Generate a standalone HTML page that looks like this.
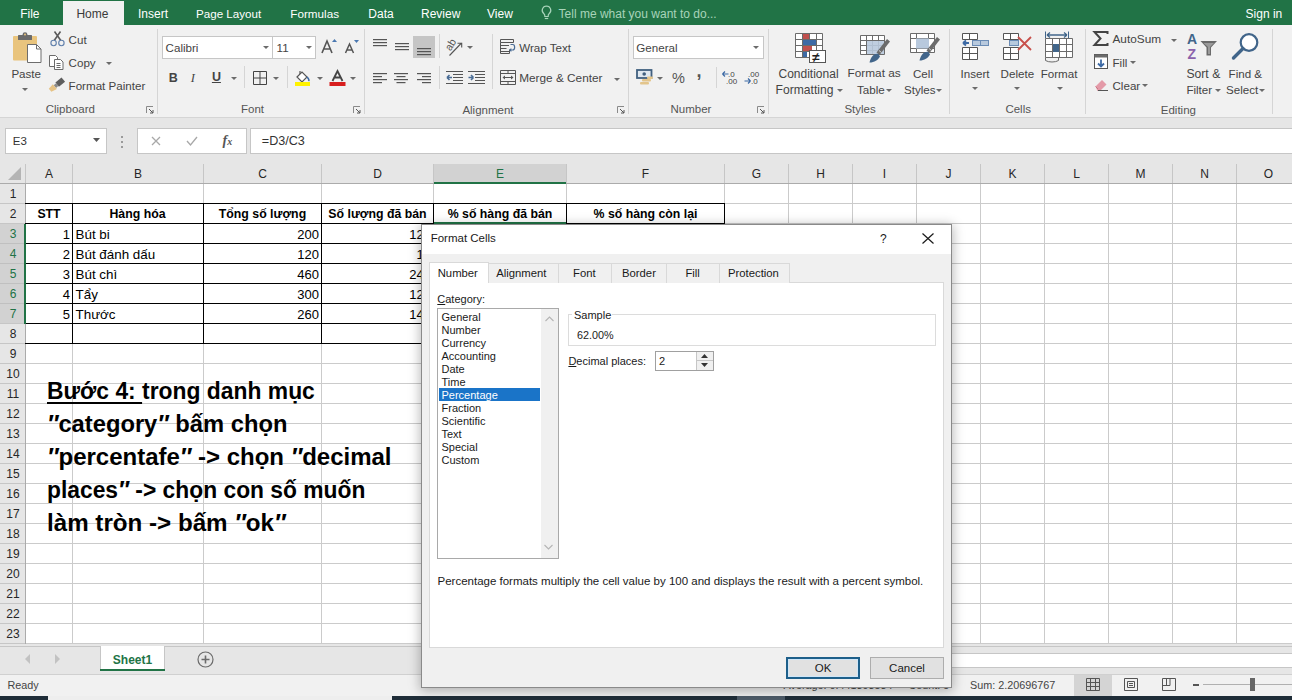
<!DOCTYPE html>
<html><head><meta charset="utf-8"><title>Excel</title><style>
*{margin:0;padding:0;box-sizing:border-box}
html,body{width:1292px;height:700px;overflow:hidden}
body{position:relative;background:#fff;font-family:"Liberation Sans",sans-serif;color:#262626}
.a{position:absolute;white-space:nowrap}
svg.a{overflow:visible}
</style></head><body>
<div class="a" style="left:0px;top:0px;width:1292px;height:25px;background:#217346"></div>
<div class="a" style="left:63px;top:1px;width:61px;height:24px;background:#f1f1f1"></div>
<div class="a" style="left:20.2px;top:7.8px;font-size:12px;line-height:12px;color:#ffffff;font-weight:400;">File</div>
<div class="a" style="left:76.4px;top:7.8px;font-size:12px;line-height:12px;color:#3a3a3a;font-weight:400;">Home</div>
<div class="a" style="left:138px;top:7.8px;font-size:12px;line-height:12px;color:#ffffff;font-weight:400;">Insert</div>
<div class="a" style="left:196px;top:8.0px;font-size:11.6px;line-height:11.6px;color:#ffffff;font-weight:400;">Page Layout</div>
<div class="a" style="left:290.3px;top:8.0px;font-size:11.7px;line-height:11.7px;color:#ffffff;font-weight:400;">Formulas</div>
<div class="a" style="left:368.3px;top:7.8px;font-size:12px;line-height:12px;color:#ffffff;font-weight:400;">Data</div>
<div class="a" style="left:421px;top:7.8px;font-size:12px;line-height:12px;color:#ffffff;font-weight:400;">Review</div>
<div class="a" style="left:487px;top:7.8px;font-size:12px;line-height:12px;color:#ffffff;font-weight:400;">View</div>
<div class="a" style="left:558.6px;top:7.6px;font-size:12px;line-height:12px;color:#a8d4ba;font-weight:400;">Tell me what you want to do...</div>
<svg class="a" style="left:541px;top:5px" width="11" height="15" viewBox="0 0 11 15"><path d="M5.5 1a4.3 4.3 0 0 0-2.6 7.7c.6.5.9 1.2.9 2v.8h3.4v-.8c0-.8.3-1.5.9-2A4.3 4.3 0 0 0 5.5 1z" fill="none" stroke="#a8d4ba" stroke-width="1.2"/><path d="M3.8 13.5h3.4" stroke="#a8d4ba" stroke-width="1.2"/></svg>
<div class="a" style="left:1245.6px;top:7.8px;font-size:12px;line-height:12px;color:#ffffff;font-weight:400;">Sign in</div>
<div class="a" style="left:0px;top:25px;width:1292px;height:92px;background:#f1f1f1"></div>
<div class="a" style="left:0px;top:117px;width:1292px;height:1px;background:#d5d5d5"></div>
<div class="a" style="left:157px;top:29px;width:1px;height:85px;background:#d5d5d5"></div>
<div class="a" style="left:364px;top:29px;width:1px;height:85px;background:#d5d5d5"></div>
<div class="a" style="left:628px;top:29px;width:1px;height:85px;background:#d5d5d5"></div>
<div class="a" style="left:768px;top:29px;width:1px;height:85px;background:#d5d5d5"></div>
<div class="a" style="left:949px;top:29px;width:1px;height:85px;background:#d5d5d5"></div>
<div class="a" style="left:1085px;top:29px;width:1px;height:85px;background:#d5d5d5"></div>
<div class="a" style="left:1272px;top:29px;width:1px;height:85px;background:#d5d5d5"></div>
<div class="a" style="left:45.7px;top:104.2px;font-size:11.5px;line-height:11.5px;color:#555;font-weight:400;">Clipboard</div>
<svg class="a" style="left:146px;top:106px" width="8" height="8" viewBox="0 0 8 8"><path d="M0.5 0.5h6.5M0.5 0.5v6.5" stroke="#8a8a8a" stroke-width="1" fill="none"/><path d="M3 3l4 4M4 7h3V4" stroke="#555" stroke-width="1" fill="none"/></svg>
<div class="a" style="left:241px;top:104.0px;font-size:11.5px;line-height:11.5px;color:#555;font-weight:400;">Font</div>
<svg class="a" style="left:353px;top:106px" width="8" height="8" viewBox="0 0 8 8"><path d="M0.5 0.5h6.5M0.5 0.5v6.5" stroke="#8a8a8a" stroke-width="1" fill="none"/><path d="M3 3l4 4M4 7h3V4" stroke="#555" stroke-width="1" fill="none"/></svg>
<div class="a" style="left:462.4px;top:104.5px;font-size:11.5px;line-height:11.5px;color:#555;font-weight:400;">Alignment</div>
<svg class="a" style="left:617px;top:106px" width="8" height="8" viewBox="0 0 8 8"><path d="M0.5 0.5h6.5M0.5 0.5v6.5" stroke="#8a8a8a" stroke-width="1" fill="none"/><path d="M3 3l4 4M4 7h3V4" stroke="#555" stroke-width="1" fill="none"/></svg>
<div class="a" style="left:670.5px;top:104.2px;font-size:11.5px;line-height:11.5px;color:#555;font-weight:400;">Number</div>
<svg class="a" style="left:757px;top:106px" width="8" height="8" viewBox="0 0 8 8"><path d="M0.5 0.5h6.5M0.5 0.5v6.5" stroke="#8a8a8a" stroke-width="1" fill="none"/><path d="M3 3l4 4M4 7h3V4" stroke="#555" stroke-width="1" fill="none"/></svg>
<div class="a" style="left:844.4px;top:104.2px;font-size:11.5px;line-height:11.5px;color:#555;font-weight:400;">Styles</div>
<div class="a" style="left:1005.4px;top:104.2px;font-size:11.5px;line-height:11.5px;color:#555;font-weight:400;">Cells</div>
<div class="a" style="left:1160.8px;top:104.5px;font-size:11.5px;line-height:11.5px;color:#555;font-weight:400;">Editing</div>
<svg class="a" style="left:12px;top:32px" width="30" height="32" viewBox="0 0 30 32"><rect x="1" y="4" width="24" height="24.5" rx="1" fill="#e9c47d"/><rect x="6" y="3" width="14" height="5" rx="0.5" fill="#6a6a6a"/><circle cx="13" cy="2.6" r="2.4" fill="#6a6a6a"/><circle cx="13" cy="2.6" r="1" fill="#e9c47d"/><path d="M15.5 12.5h9l4.5 4.5v13.5h-13.5z" fill="#fff" stroke="#6d6d6d"/><path d="M24.5 12.5v4.5h4.5" fill="none" stroke="#6d6d6d"/></svg>
<div class="a" style="left:11.4px;top:68.2px;font-size:11.6px;line-height:11.6px;color:#444;font-weight:400;">Paste</div>
<svg class="a" style="left:21.6px;top:88.1px" width="6" height="3" viewBox="0 0 6 3"><path d="M0 0h6L3 3z" fill="#6b6b6b"/></svg>
<svg class="a" style="left:50px;top:31px" width="15" height="16" viewBox="0 0 15 16"><path d="M4.2 9.5L10.5 0.5M10.8 9.5L4.5 0.5" stroke="#5a5a5a" stroke-width="1.6"/><circle cx="3.6" cy="12" r="2.7" fill="none" stroke="#5f7fab" stroke-width="1.1"/><circle cx="11.4" cy="12" r="2.7" fill="none" stroke="#5f7fab" stroke-width="1.1"/></svg>
<div class="a" style="left:68.6px;top:34.2px;font-size:11.6px;line-height:11.6px;color:#444;font-weight:400;">Cut</div>
<svg class="a" style="left:49px;top:55px" width="15" height="15" viewBox="0 0 15 15"><path d="M0.5 0.5h6l2 2v9h-8z" fill="#fff" stroke="#6b6b6b"/><path d="M5.5 4.5h6l2.5 2.5v7.5h-8.5z" fill="#fff" stroke="#6b6b6b"/><path d="M7.5 8.5h4M7.5 10.5h4M7.5 12.5h4" stroke="#6b6b6b"/></svg>
<div class="a" style="left:68.6px;top:57.2px;font-size:11.6px;line-height:11.6px;color:#444;font-weight:400;">Copy</div>
<svg class="a" style="left:105.6px;top:61.5px" width="6" height="3" viewBox="0 0 6 3"><path d="M0 0h6L3 3z" fill="#6b6b6b"/></svg>
<svg class="a" style="left:48px;top:77px" width="18" height="15" viewBox="0 0 18 15"><g transform="rotate(-40 9 7.5)"><rect x="9" y="5" width="8" height="5.5" fill="#5e5e5e"/><rect x="6" y="6" width="3" height="3.5" fill="#8a8a8a"/><path d="M6 4.5L0 5.5v4L6 11z" fill="#e6c386"/></g></svg>
<div class="a" style="left:68.6px;top:79.9px;font-size:11.6px;line-height:11.6px;color:#444;font-weight:400;">Format Painter</div>
<div class="a" style="left:162px;top:36px;width:111px;height:23px;background:#fff;border:1px solid #c6c6c6"></div>
<div class="a" style="left:272px;top:36px;width:44px;height:23px;background:#fff;border:1px solid #c6c6c6"></div>
<div class="a" style="left:165.6px;top:42.0px;font-size:11.6px;line-height:11.6px;color:#444;font-weight:400;">Calibri</div>
<svg class="a" style="left:262.5px;top:46.0px" width="6" height="3" viewBox="0 0 6 3"><path d="M0 0h6L3 3z" fill="#6b6b6b"/></svg>
<div class="a" style="left:276.6px;top:42.0px;font-size:11.6px;line-height:11.6px;color:#444;font-weight:400;">11</div>
<svg class="a" style="left:305.6px;top:46.0px" width="6" height="3" viewBox="0 0 6 3"><path d="M0 0h6L3 3z" fill="#6b6b6b"/></svg>
<svg class="a" style="left:321px;top:38px" width="16" height="16" viewBox="0 0 16 16"><path d="M1 15L6 3l5 12M3 11h6" fill="none" stroke="#555" stroke-width="1.6"/><path d="M11 4l2.5-3 2.5 3z" fill="#4a78b0"/></svg>
<svg class="a" style="left:344px;top:39px" width="15" height="15" viewBox="0 0 15 15"><path d="M1.5 14L5.5 5l4 9M3 11h5" fill="none" stroke="#555" stroke-width="1.5"/><path d="M10 1h5l-2.5 3z" fill="#4a78b0"/></svg>
<div class="a" style="left:168.8px;top:71.5px;font-size:12.5px;line-height:12.5px;color:#444;font-weight:700;">B</div>
<div class="a" style="left:190.8px;top:71.5px;font-size:12.5px;line-height:12.5px;color:#444;font-weight:400;font-style:italic;font-family:'Liberation Serif',serif">I</div>
<div class="a" style="left:211.9px;top:71.0px;font-size:12.5px;line-height:12.5px;color:#444;font-weight:700;"><u>U</u></div>
<svg class="a" style="left:230.5px;top:76.5px" width="6" height="3" viewBox="0 0 6 3"><path d="M0 0h6L3 3z" fill="#6b6b6b"/></svg>
<div class="a" style="left:244px;top:66px;width:1px;height:22px;background:#d5d5d5"></div>
<svg class="a" style="left:253px;top:71px" width="14" height="14" viewBox="0 0 14 14"><path d="M0.5 0.5h13v13h-13zM7 0.5v13M0.5 7h13" fill="none" stroke="#444" stroke-width="1"/></svg>
<svg class="a" style="left:273px;top:76.5px" width="6" height="3" viewBox="0 0 6 3"><path d="M0 0h6L3 3z" fill="#6b6b6b"/></svg>
<div class="a" style="left:287px;top:66px;width:1px;height:22px;background:#d5d5d5"></div>
<svg class="a" style="left:294px;top:70px" width="18" height="17" viewBox="0 0 18 17"><path d="M3 7l5-5 5 5-5 5z" fill="#fff" stroke="#555" stroke-width="1.2"/><path d="M6 4V1" stroke="#555" stroke-width="1.2"/><path d="M13 7c1.5 1.5 2.5 3 1.5 4" stroke="#3d6aa5" stroke-width="1.6" fill="none"/><rect x="1" y="12" width="15" height="4" fill="#fff200"/></svg>
<svg class="a" style="left:316.5px;top:76.5px" width="6" height="3" viewBox="0 0 6 3"><path d="M0 0h6L3 3z" fill="#6b6b6b"/></svg>
<svg class="a" style="left:329px;top:70px" width="17" height="17" viewBox="0 0 17 17"><path d="M3.5 11L8.5 1l5 10M5.5 7.5h6" fill="none" stroke="#444" stroke-width="1.8"/><rect x="0.5" y="12" width="16" height="4" fill="#d81e1e"/></svg>
<svg class="a" style="left:350.4px;top:76.5px" width="6" height="3" viewBox="0 0 6 3"><path d="M0 0h6L3 3z" fill="#6b6b6b"/></svg>
<svg class="a" style="left:373px;top:39px" width="14" height="9" viewBox="0 0 14 9"><rect x="0" y="0" width="14" height="1.2" fill="#555"/><rect x="0" y="3" width="14" height="1.2" fill="#555"/><rect x="0" y="6" width="14" height="1.2" fill="#555"/></svg>
<svg class="a" style="left:394.5px;top:43px" width="14" height="9" viewBox="0 0 14 9"><rect x="0" y="0" width="14" height="1.2" fill="#555"/><rect x="0" y="3" width="14" height="1.2" fill="#555"/><rect x="0" y="6" width="14" height="1.2" fill="#555"/></svg>
<div class="a" style="left:413px;top:36px;width:22px;height:22px;background:#c5c5c5"></div>
<svg class="a" style="left:417px;top:48px" width="14" height="9" viewBox="0 0 14 9"><rect x="0" y="0" width="14" height="1.2" fill="#555"/><rect x="0" y="3" width="14" height="1.2" fill="#555"/><rect x="0" y="6" width="14" height="1.2" fill="#555"/></svg>
<div class="a" style="left:439px;top:34px;width:1px;height:24px;background:#d5d5d5"></div>
<div class="a" style="left:439px;top:66px;width:1px;height:23px;background:#d5d5d5"></div>
<svg class="a" style="left:446px;top:38px" width="18" height="18" viewBox="0 0 18 18"><text x="0" y="0" font-size="10.5" font-family="Liberation Sans" fill="#555" transform="translate(4.5 13.5) rotate(-58)">ab</text><path d="M3.5 17.5L15.5 5M11.5 5.2h4.2v4.2" stroke="#555" stroke-width="1.1" fill="none"/></svg>
<svg class="a" style="left:466.7px;top:45.5px" width="6" height="3" viewBox="0 0 6 3"><path d="M0 0h6L3 3z" fill="#6b6b6b"/></svg>
<div class="a" style="left:491.7px;top:34px;width:1px;height:55px;background:#d5d5d5"></div>
<svg class="a" style="left:500px;top:39px" width="17" height="15" viewBox="0 0 17 15"><path d="M0.5 0.5h13v3h-13zM0.5 3.5v11h9M0.5 6.5h8.5M0.5 9.5h6M0.5 12.5h8.5M9.5 14.5v-4" fill="none" stroke="#555" stroke-width="1"/><path d="M10.5 5.5h2.2c2.6 0 2.6 5.5 0 5.5H10" fill="none" stroke="#4a6d96" stroke-width="1.2"/><path d="M9 11l2.3-2v4z" fill="#4a6d96"/></svg>
<div class="a" style="left:519.2px;top:42.2px;font-size:11.6px;line-height:11.6px;color:#444;font-weight:400;">Wrap Text</div>
<svg class="a" style="left:373px;top:73px" width="14" height="12" viewBox="0 0 14 12"><rect x="0" y="0" width="14" height="1.2" fill="#555"/><rect x="0" y="3" width="9" height="1.2" fill="#555"/><rect x="0" y="6" width="14" height="1.2" fill="#555"/><rect x="0" y="9" width="9" height="1.2" fill="#555"/></svg>
<svg class="a" style="left:394px;top:73px" width="14" height="12" viewBox="0 0 14 12"><rect x="0.0" y="0" width="14" height="1.2" fill="#555"/><rect x="2.5" y="3" width="9" height="1.2" fill="#555"/><rect x="0.0" y="6" width="14" height="1.2" fill="#555"/><rect x="2.5" y="9" width="9" height="1.2" fill="#555"/></svg>
<svg class="a" style="left:417px;top:73px" width="14" height="12" viewBox="0 0 14 12"><rect x="0" y="0" width="14" height="1.2" fill="#555"/><rect x="5" y="3" width="9" height="1.2" fill="#555"/><rect x="0" y="6" width="14" height="1.2" fill="#555"/><rect x="5" y="9" width="9" height="1.2" fill="#555"/></svg>
<svg class="a" style="left:446px;top:70px" width="17" height="15" viewBox="0 0 17 15"><path d="M0 1.5h17M7 4.5h10M7 7.5h10M7 10.5h10M0 13.5h17" stroke="#555" stroke-width="1.1"/><path d="M1 7.5h5M1 7.5l2.5-2.5M1 7.5l2.5 2.5" stroke="#4a6d96" stroke-width="1.6" fill="none"/></svg>
<svg class="a" style="left:468px;top:70px" width="17" height="15" viewBox="0 0 17 15"><path d="M0 1.5h17M7 4.5h10M7 7.5h10M7 10.5h10M0 13.5h17" stroke="#555" stroke-width="1.1"/><path d="M0.5 7.5h5M5.5 7.5L3 5M5.5 7.5L3 10" stroke="#4a6d96" stroke-width="1.6" fill="none"/></svg>
<svg class="a" style="left:500px;top:70px" width="16" height="15" viewBox="0 0 16 15"><path d="M0.5 0.5h15v14h-15zM0.5 3.5h15M0.5 11.5h15M8 0.5v3M8 11.5v3" fill="none" stroke="#555" stroke-width="1"/><path d="M3 7.5h10" stroke="#555" stroke-width="1"/><path d="M2.5 7.5l2.5-2v4zM13.5 7.5l-2.5-2v4z" fill="#555"/></svg>
<div class="a" style="left:519.2px;top:73.1px;font-size:11.8px;line-height:11.8px;color:#444;font-weight:400;">Merge &amp; Center</div>
<svg class="a" style="left:613.6px;top:77.5px" width="6" height="3" viewBox="0 0 6 3"><path d="M0 0h6L3 3z" fill="#6b6b6b"/></svg>
<div class="a" style="left:633px;top:36px;width:131px;height:23px;background:#fff;border:1px solid #c6c6c6"></div>
<div class="a" style="left:636.3px;top:41.6px;font-size:11.6px;line-height:11.6px;color:#444;font-weight:400;">General</div>
<svg class="a" style="left:753.4px;top:46.0px" width="6" height="3" viewBox="0 0 6 3"><path d="M0 0h6L3 3z" fill="#6b6b6b"/></svg>
<svg class="a" style="left:636px;top:69px" width="18" height="18" viewBox="0 0 18 18"><rect x="1" y="1" width="14.5" height="8" fill="#dfe8f0" stroke="#41607f" stroke-width="1.8"/><circle cx="8.2" cy="5" r="1.8" fill="#41607f"/><rect x="6" y="10" width="9" height="2.4" rx="1" fill="#e3c58c"/><rect x="4" y="13" width="9" height="2.4" rx="1" fill="#e3c58c"/><rect x="11" y="7.5" width="6" height="2.4" rx="1" fill="#e3c58c"/></svg>
<svg class="a" style="left:657.4px;top:76.5px" width="6" height="3" viewBox="0 0 6 3"><path d="M0 0h6L3 3z" fill="#6b6b6b"/></svg>
<div class="a" style="left:672px;top:71.0px;font-size:14.5px;line-height:14.5px;color:#555;font-weight:400;">%</div>
<div class="a" style="left:696.5px;top:61.5px;font-size:18px;line-height:18px;color:#555;font-weight:700;">,</div>
<div class="a" style="left:715.7px;top:67px;width:1px;height:21px;background:#d5d5d5"></div>
<svg class="a" style="left:722px;top:70px" width="17" height="15" viewBox="0 0 17 15"><text x="6" y="7" font-size="8" font-family="Liberation Sans" fill="#444">.0</text><text x="4" y="14" font-size="8" font-family="Liberation Sans" fill="#444">.00</text><path d="M0.5 4h6M0.5 4l2.5-2.5M0.5 4l2.5 2.5" stroke="#3d6aa5" stroke-width="1.2" fill="none"/></svg>
<svg class="a" style="left:744px;top:70px" width="17" height="15" viewBox="0 0 17 15"><text x="4" y="7" font-size="8" font-family="Liberation Sans" fill="#444">.00</text><text x="7" y="14" font-size="8" font-family="Liberation Sans" fill="#444">.0</text><path d="M0.5 11h6M6.5 11l-2.5-2.5M6.5 11l-2.5 2.5" stroke="#3d6aa5" stroke-width="1.2" fill="none"/></svg>
<svg class="a" style="left:795px;top:33px" width="31" height="30" viewBox="0 0 31 30"><path d="M0.5 0.5h27v24h-27zM0.5 6.5h27M0.5 12.5h27M0.5 18.5h27M7.5 0.5v24M14.5 0.5v24M21.5 0.5v24" fill="#fff" stroke="#6b6b6b" stroke-width="1"/><rect x="8" y="1" width="6" height="5" fill="#c0504d"/><rect x="8" y="7" width="13" height="5" fill="#3d6aa5"/><rect x="8" y="13" width="9" height="5" fill="#c0504d"/><rect x="8" y="19" width="4" height="5" fill="#3d6aa5"/><rect x="14.5" y="17.5" width="16" height="12" fill="#fff" stroke="#555"/><text x="17.2" y="28.5" font-size="13.5" font-weight="700" font-family="Liberation Sans" fill="#222">≠</text></svg>
<div class="a" style="left:778.5px;top:68.0px;font-size:12px;line-height:12px;color:#444;font-weight:400;">Conditional</div>
<div class="a" style="left:775.6px;top:83.7px;font-size:12.1px;line-height:12.1px;color:#444;font-weight:400;">Formatting</div>
<svg class="a" style="left:836.7px;top:88.5px" width="6" height="3" viewBox="0 0 6 3"><path d="M0 0h6L3 3z" fill="#6b6b6b"/></svg>
<svg class="a" style="left:860px;top:35px" width="30" height="28" viewBox="0 0 30 28"><path d="M0.5 0.5h24v19h-24zM0.5 5.5h24M0.5 10.5h24M0.5 15.5h24M6.5 0.5v19M12.5 0.5v19M18.5 0.5v19" fill="#fff" stroke="#6b6b6b" stroke-width="1"/><rect x="7" y="6" width="17" height="13" fill="#b8c9dd" opacity="0.9"/><path d="M16.5 17.5L27 4l3 2.5-10.5 13.5z" fill="#6b6b6b"/><path d="M19 15.5l2.5 2" stroke="#cfcfcf" stroke-width="1"/><path d="M9.5 27.5c1.5-6 5-9.5 9-8.5l1.5 2.5c-2 3.5-5.5 6-10.5 6z" fill="#41658a"/></svg>
<div class="a" style="left:847.6px;top:68.1px;font-size:11.8px;line-height:11.8px;color:#444;font-weight:400;">Format as</div>
<div class="a" style="left:857px;top:83.9px;font-size:11.6px;line-height:11.6px;color:#444;font-weight:400;">Table</div>
<svg class="a" style="left:885.5px;top:88.5px" width="6" height="3" viewBox="0 0 6 3"><path d="M0 0h6L3 3z" fill="#6b6b6b"/></svg>
<svg class="a" style="left:910px;top:33px" width="30" height="29" viewBox="0 0 30 29"><path d="M0.5 0.5h24v19h-24zM0.5 5.5h24M0.5 15.5h24M6.5 0.5v19M18.5 0.5v19" fill="#fff" stroke="#6b6b6b" stroke-width="1"/><rect x="6" y="5.5" width="13" height="10" fill="#b8c9dd"/><path d="M16.5 17.5L27 4l3 2.5-10.5 13.5z" fill="#6b6b6b"/><path d="M19 15.5l2.5 2" stroke="#cfcfcf" stroke-width="1"/><path d="M9.5 27.5c1.5-6 5-9.5 9-8.5l1.5 2.5c-2 3.5-5.5 6-10.5 6z" fill="#41658a"/></svg>
<div class="a" style="left:913px;top:68.2px;font-size:11.6px;line-height:11.6px;color:#444;font-weight:400;">Cell</div>
<div class="a" style="left:904px;top:83.9px;font-size:11.6px;line-height:11.6px;color:#444;font-weight:400;">Styles</div>
<svg class="a" style="left:936px;top:88.5px" width="6" height="3" viewBox="0 0 6 3"><path d="M0 0h6L3 3z" fill="#6b6b6b"/></svg>
<svg class="a" style="left:962px;top:33px" width="27" height="27" viewBox="0 0 27 27"><path d="M0.5 0.5h15v6h-15zM7.5 0.5v6M0.5 14.5h15v12h-15zM0.5 20.5h15M7.5 14.5v12" fill="#fff" stroke="#555"/><rect x="10.5" y="7.5" width="16" height="5" fill="#b8c9dd" stroke="#6b8cb5"/><path d="M18.5 7.5v5" stroke="#6b8cb5"/><path d="M1 10h6M1 10l3-2.5M1 10l3 2.5" stroke="#3d6aa5" stroke-width="1.8" fill="none"/></svg>
<div class="a" style="left:960.6px;top:68.1px;font-size:11.6px;line-height:11.6px;color:#444;font-weight:400;">Insert</div>
<svg class="a" style="left:971.9px;top:87.3px" width="6" height="3" viewBox="0 0 6 3"><path d="M0 0h6L3 3z" fill="#6b6b6b"/></svg>
<svg class="a" style="left:1003px;top:33px" width="30" height="28" viewBox="0 0 30 28"><path d="M0.5 0.5h15v6h-15zM7.5 0.5v6M0.5 14.5h15v12h-15zM0.5 20.5h15M7.5 14.5v12" fill="#fff" stroke="#555"/><rect x="6.5" y="7.5" width="9" height="5" fill="#b8c9dd" stroke="#6b8cb5"/><path d="M15 4l13 13M28 4L15 17" stroke="#c8504b" stroke-width="1.8"/></svg>
<div class="a" style="left:1000.6px;top:68.1px;font-size:11.6px;line-height:11.6px;color:#444;font-weight:400;">Delete</div>
<svg class="a" style="left:1013.6px;top:87.3px" width="6" height="3" viewBox="0 0 6 3"><path d="M0 0h6L3 3z" fill="#6b6b6b"/></svg>
<svg class="a" style="left:1045px;top:31px" width="29" height="32" viewBox="0 0 29 32"><path d="M2 4h20M2 4l3-2.5M2 4l3 2.5M22 4l-3-2.5M22 4l-3 2.5" stroke="#41658a" stroke-width="1.3" fill="none"/><path d="M0.5 0.5v7M23.5 0.5v7" stroke="#41658a"/><path d="M0.5 7.5h27v19h-27zM0.5 13.5h27M0.5 20.5h27M7.5 7.5v19M14.5 7.5v19M21.5 7.5v19" fill="#fff" stroke="#6b6b6b"/><rect x="8" y="13" width="6" height="8" fill="#41658a"/><path d="M0.5 26.5v3c3 2 10 2 13 0v-3" fill="none" stroke="#6b6b6b"/></svg>
<div class="a" style="left:1040.7px;top:68.1px;font-size:11.6px;line-height:11.6px;color:#444;font-weight:400;">Format</div>
<svg class="a" style="left:1056.7px;top:87.3px" width="6" height="3" viewBox="0 0 6 3"><path d="M0 0h6L3 3z" fill="#6b6b6b"/></svg>
<svg class="a" style="left:1093px;top:31px" width="16" height="15" viewBox="0 0 16 15"><path d="M14.5 3V1H1.5l6 6.5-6 6.5h13v-2" fill="none" stroke="#444" stroke-width="2"/></svg>
<div class="a" style="left:1112.5px;top:34.1px;font-size:11.8px;line-height:11.8px;color:#444;font-weight:400;">AutoSum</div>
<svg class="a" style="left:1171.4px;top:38.5px" width="6" height="3" viewBox="0 0 6 3"><path d="M0 0h6L3 3z" fill="#6b6b6b"/></svg>
<svg class="a" style="left:1094px;top:54px" width="15" height="16" viewBox="0 0 15 16"><rect x="0.5" y="0.5" width="13" height="14" fill="#fff" stroke="#555"/><rect x="0.5" y="0.5" width="13" height="3" fill="#6b6b6b"/><path d="M7 5.5v7M4 9.5l3 3 3-3" stroke="#3d6aa5" stroke-width="1.8" fill="none"/></svg>
<div class="a" style="left:1112.5px;top:56.6px;font-size:11.6px;line-height:11.6px;color:#444;font-weight:400;">Fill</div>
<svg class="a" style="left:1129.5px;top:60.9px" width="6" height="3" viewBox="0 0 6 3"><path d="M0 0h6L3 3z" fill="#6b6b6b"/></svg>
<svg class="a" style="left:1094px;top:77px" width="15" height="14" viewBox="0 0 15 14"><path d="M1.5 9.5l6.5-6.5 4.5 4.5-6.5 6.5H3.5z" fill="#e49aa8"/><path d="M1.5 9.5l2.5 2.5" stroke="#c97887"/><path d="M4 13.5h10" stroke="#555"/></svg>
<div class="a" style="left:1112.5px;top:79.9px;font-size:11.6px;line-height:11.6px;color:#444;font-weight:400;">Clear</div>
<svg class="a" style="left:1141.8px;top:84.2px" width="6" height="3" viewBox="0 0 6 3"><path d="M0 0h6L3 3z" fill="#6b6b6b"/></svg>
<svg class="a" style="left:1187px;top:33px" width="31" height="28" viewBox="0 0 31 28"><text x="0" y="11" font-size="14" font-weight="700" font-family="Liberation Sans" fill="#41658a">A</text><text x="0.5" y="26" font-size="14" font-weight="700" font-family="Liberation Sans" fill="#8b62ab">Z</text><path d="M13.5 8h16.5l-6 6.5V22.5h-4.5v-8z" fill="#6b6b6b"/><path d="M16.5 10h10.5l-4 4v7h-2v-7z" fill="#9a9a9a"/></svg>
<div class="a" style="left:1186.4px;top:67.8px;font-size:12.2px;line-height:12.2px;color:#444;font-weight:400;">Sort &amp;</div>
<div class="a" style="left:1186.4px;top:84.0px;font-size:11.6px;line-height:11.6px;color:#444;font-weight:400;">Filter</div>
<svg class="a" style="left:1214.6px;top:88.5px" width="6" height="3" viewBox="0 0 6 3"><path d="M0 0h6L3 3z" fill="#6b6b6b"/></svg>
<svg class="a" style="left:1231px;top:32px" width="29" height="29" viewBox="0 0 29 29"><circle cx="18" cy="10.5" r="8.3" fill="#fff" stroke="#41658a" stroke-width="2.2"/><path d="M12 16.5L2.5 26" stroke="#41658a" stroke-width="3.4" stroke-linecap="round"/></svg>
<div class="a" style="left:1228.6px;top:68.1px;font-size:11.6px;line-height:11.6px;color:#444;font-weight:400;">Find &amp;</div>
<div class="a" style="left:1226px;top:84.0px;font-size:11.6px;line-height:11.6px;color:#444;font-weight:400;">Select</div>
<svg class="a" style="left:1259px;top:88.5px" width="6" height="3" viewBox="0 0 6 3"><path d="M0 0h6L3 3z" fill="#6b6b6b"/></svg>
<div class="a" style="left:0px;top:118px;width:1292px;height:65px;background:#e6e6e6"></div>
<div class="a" style="left:5px;top:128px;width:102px;height:26px;background:#fff;border:1px solid #c6c6c6"></div>
<div class="a" style="left:12.8px;top:136.2px;font-size:11.5px;line-height:11.5px;color:#333;font-weight:400;">E3</div>
<svg class="a" style="left:93px;top:138px" width="8" height="5" viewBox="0 0 8 5"><path d="M0 0h7l-3.5 4z" fill="#555"/></svg>
<div class="a" style="left:121px;top:136px;width:2px;height:2px;background:#9a9a9a"></div>
<div class="a" style="left:121px;top:141px;width:2px;height:2px;background:#9a9a9a"></div>
<div class="a" style="left:121px;top:146px;width:2px;height:2px;background:#9a9a9a"></div>
<div class="a" style="left:137px;top:128px;width:110px;height:26px;background:#fff;border:1px solid #c6c6c6"></div>
<svg class="a" style="left:151px;top:136px" width="10" height="10" viewBox="0 0 10 10"><path d="M1 1l8 8M9 1l-8 8" stroke="#a8a8a8" stroke-width="1.3"/></svg>
<svg class="a" style="left:186px;top:136px" width="12" height="10" viewBox="0 0 12 10"><path d="M1 5l3.5 4L11 1" stroke="#a8a8a8" stroke-width="1.3" fill="none"/></svg>
<div class="a" style="left:222.5px;top:134.0px;font-size:14px;line-height:14px;color:#555;font-weight:700;font-family:'Liberation Serif',serif"><i>f</i><span style='font-size:10px'><i>x</i></span></div>
<div class="a" style="left:250px;top:128px;width:1050px;height:26px;background:#fff;border:1px solid #c6c6c6"></div>
<div class="a" style="left:261.8px;top:135.2px;font-size:12.6px;line-height:12.6px;color:#333;font-weight:400;">=D3/C3</div>
<div class="a" style="left:0px;top:160px;width:1292px;height:23px;background:#e6e6e6"></div>
<svg class="a" style="left:7px;top:167px" width="15" height="14" viewBox="0 0 15 14"><path d="M14 0v13H1z" fill="#b4b4b4"/></svg>
<div class="a" style="left:25px;top:164px;width:1px;height:19px;background:#c6c6c6"></div>
<div class="a" style="left:72px;top:164px;width:1px;height:19px;background:#c6c6c6"></div>
<div class="a" style="left:-101.0px;width:300px;text-align:center;top:168.0px;font-size:12px;line-height:12px;color:#262626;font-weight:400;">A</div>
<div class="a" style="left:203px;top:164px;width:1px;height:19px;background:#c6c6c6"></div>
<div class="a" style="left:-12.0px;width:300px;text-align:center;top:168.0px;font-size:12px;line-height:12px;color:#262626;font-weight:400;">B</div>
<div class="a" style="left:321px;top:164px;width:1px;height:19px;background:#c6c6c6"></div>
<div class="a" style="left:112.5px;width:300px;text-align:center;top:168.0px;font-size:12px;line-height:12px;color:#262626;font-weight:400;">C</div>
<div class="a" style="left:433px;top:164px;width:1px;height:19px;background:#c6c6c6"></div>
<div class="a" style="left:227.5px;width:300px;text-align:center;top:168.0px;font-size:12px;line-height:12px;color:#262626;font-weight:400;">D</div>
<div class="a" style="left:434px;top:164px;width:132px;height:19px;background:#d2d2d2"></div>
<div class="a" style="left:566px;top:164px;width:1px;height:19px;background:#c6c6c6"></div>
<div class="a" style="left:350.0px;width:300px;text-align:center;top:168.0px;font-size:12px;line-height:12px;color:#217346;font-weight:400;">E</div>
<div class="a" style="left:724px;top:164px;width:1px;height:19px;background:#c6c6c6"></div>
<div class="a" style="left:495.5px;width:300px;text-align:center;top:168.0px;font-size:12px;line-height:12px;color:#262626;font-weight:400;">F</div>
<div class="a" style="left:788px;top:164px;width:1px;height:19px;background:#c6c6c6"></div>
<div class="a" style="left:606.5px;width:300px;text-align:center;top:168.0px;font-size:12px;line-height:12px;color:#262626;font-weight:400;">G</div>
<div class="a" style="left:852px;top:164px;width:1px;height:19px;background:#c6c6c6"></div>
<div class="a" style="left:670.5px;width:300px;text-align:center;top:168.0px;font-size:12px;line-height:12px;color:#262626;font-weight:400;">H</div>
<div class="a" style="left:916px;top:164px;width:1px;height:19px;background:#c6c6c6"></div>
<div class="a" style="left:734.5px;width:300px;text-align:center;top:168.0px;font-size:12px;line-height:12px;color:#262626;font-weight:400;">I</div>
<div class="a" style="left:980px;top:164px;width:1px;height:19px;background:#c6c6c6"></div>
<div class="a" style="left:798.5px;width:300px;text-align:center;top:168.0px;font-size:12px;line-height:12px;color:#262626;font-weight:400;">J</div>
<div class="a" style="left:1044px;top:164px;width:1px;height:19px;background:#c6c6c6"></div>
<div class="a" style="left:862.5px;width:300px;text-align:center;top:168.0px;font-size:12px;line-height:12px;color:#262626;font-weight:400;">K</div>
<div class="a" style="left:1108px;top:164px;width:1px;height:19px;background:#c6c6c6"></div>
<div class="a" style="left:926.5px;width:300px;text-align:center;top:168.0px;font-size:12px;line-height:12px;color:#262626;font-weight:400;">L</div>
<div class="a" style="left:1172px;top:164px;width:1px;height:19px;background:#c6c6c6"></div>
<div class="a" style="left:990.5px;width:300px;text-align:center;top:168.0px;font-size:12px;line-height:12px;color:#262626;font-weight:400;">M</div>
<div class="a" style="left:1236px;top:164px;width:1px;height:19px;background:#c6c6c6"></div>
<div class="a" style="left:1054.5px;width:300px;text-align:center;top:168.0px;font-size:12px;line-height:12px;color:#262626;font-weight:400;">N</div>
<div class="a" style="left:1300px;top:164px;width:1px;height:19px;background:#c6c6c6"></div>
<div class="a" style="left:1118.5px;width:300px;text-align:center;top:168.0px;font-size:12px;line-height:12px;color:#262626;font-weight:400;">O</div>
<div class="a" style="left:0px;top:183px;width:1292px;height:1px;background:#ababab"></div>
<div class="a" style="left:434px;top:182px;width:132px;height:2px;background:#217346"></div>
<div class="a" style="left:0px;top:184px;width:1292px;height:460px;background:#fff"></div>
<div class="a" style="left:0px;top:184px;width:25px;height:460px;background:#e6e6e6"></div>
<div class="a" style="left:0px;top:203px;width:25px;height:1px;background:#c6c6c6"></div>
<div class="a" style="left:-137px;width:300px;text-align:center;top:187.5px;font-size:12px;line-height:12px;color:#262626;font-weight:400;">1</div>
<div class="a" style="left:0px;top:223px;width:25px;height:1px;background:#c6c6c6"></div>
<div class="a" style="left:-137px;width:300px;text-align:center;top:207.5px;font-size:12px;line-height:12px;color:#262626;font-weight:400;">2</div>
<div class="a" style="left:0px;top:224px;width:25px;height:20px;background:#d2d2d2"></div>
<div class="a" style="left:0px;top:243px;width:25px;height:1px;background:#c0c0c0"></div>
<div class="a" style="left:-137px;width:300px;text-align:center;top:227.5px;font-size:12px;line-height:12px;color:#217346;font-weight:400;">3</div>
<div class="a" style="left:0px;top:244px;width:25px;height:20px;background:#d2d2d2"></div>
<div class="a" style="left:0px;top:263px;width:25px;height:1px;background:#c0c0c0"></div>
<div class="a" style="left:-137px;width:300px;text-align:center;top:247.5px;font-size:12px;line-height:12px;color:#217346;font-weight:400;">4</div>
<div class="a" style="left:0px;top:264px;width:25px;height:20px;background:#d2d2d2"></div>
<div class="a" style="left:0px;top:283px;width:25px;height:1px;background:#c0c0c0"></div>
<div class="a" style="left:-137px;width:300px;text-align:center;top:267.5px;font-size:12px;line-height:12px;color:#217346;font-weight:400;">5</div>
<div class="a" style="left:0px;top:284px;width:25px;height:20px;background:#d2d2d2"></div>
<div class="a" style="left:0px;top:303px;width:25px;height:1px;background:#c0c0c0"></div>
<div class="a" style="left:-137px;width:300px;text-align:center;top:287.5px;font-size:12px;line-height:12px;color:#217346;font-weight:400;">6</div>
<div class="a" style="left:0px;top:304px;width:25px;height:20px;background:#d2d2d2"></div>
<div class="a" style="left:0px;top:323px;width:25px;height:1px;background:#c6c6c6"></div>
<div class="a" style="left:-137px;width:300px;text-align:center;top:307.5px;font-size:12px;line-height:12px;color:#217346;font-weight:400;">7</div>
<div class="a" style="left:0px;top:343px;width:25px;height:1px;background:#c6c6c6"></div>
<div class="a" style="left:-137px;width:300px;text-align:center;top:327.5px;font-size:12px;line-height:12px;color:#262626;font-weight:400;">8</div>
<div class="a" style="left:0px;top:363px;width:25px;height:1px;background:#c6c6c6"></div>
<div class="a" style="left:-137px;width:300px;text-align:center;top:347.5px;font-size:12px;line-height:12px;color:#262626;font-weight:400;">9</div>
<div class="a" style="left:0px;top:383px;width:25px;height:1px;background:#c6c6c6"></div>
<div class="a" style="left:-137px;width:300px;text-align:center;top:367.5px;font-size:12px;line-height:12px;color:#262626;font-weight:400;">10</div>
<div class="a" style="left:0px;top:403px;width:25px;height:1px;background:#c6c6c6"></div>
<div class="a" style="left:-137px;width:300px;text-align:center;top:387.5px;font-size:12px;line-height:12px;color:#262626;font-weight:400;">11</div>
<div class="a" style="left:0px;top:423px;width:25px;height:1px;background:#c6c6c6"></div>
<div class="a" style="left:-137px;width:300px;text-align:center;top:407.5px;font-size:12px;line-height:12px;color:#262626;font-weight:400;">12</div>
<div class="a" style="left:0px;top:443px;width:25px;height:1px;background:#c6c6c6"></div>
<div class="a" style="left:-137px;width:300px;text-align:center;top:427.5px;font-size:12px;line-height:12px;color:#262626;font-weight:400;">13</div>
<div class="a" style="left:0px;top:463px;width:25px;height:1px;background:#c6c6c6"></div>
<div class="a" style="left:-137px;width:300px;text-align:center;top:447.5px;font-size:12px;line-height:12px;color:#262626;font-weight:400;">14</div>
<div class="a" style="left:0px;top:483px;width:25px;height:1px;background:#c6c6c6"></div>
<div class="a" style="left:-137px;width:300px;text-align:center;top:467.5px;font-size:12px;line-height:12px;color:#262626;font-weight:400;">15</div>
<div class="a" style="left:0px;top:503px;width:25px;height:1px;background:#c6c6c6"></div>
<div class="a" style="left:-137px;width:300px;text-align:center;top:487.5px;font-size:12px;line-height:12px;color:#262626;font-weight:400;">16</div>
<div class="a" style="left:0px;top:523px;width:25px;height:1px;background:#c6c6c6"></div>
<div class="a" style="left:-137px;width:300px;text-align:center;top:507.5px;font-size:12px;line-height:12px;color:#262626;font-weight:400;">17</div>
<div class="a" style="left:0px;top:543px;width:25px;height:1px;background:#c6c6c6"></div>
<div class="a" style="left:-137px;width:300px;text-align:center;top:527.5px;font-size:12px;line-height:12px;color:#262626;font-weight:400;">18</div>
<div class="a" style="left:0px;top:563px;width:25px;height:1px;background:#c6c6c6"></div>
<div class="a" style="left:-137px;width:300px;text-align:center;top:547.5px;font-size:12px;line-height:12px;color:#262626;font-weight:400;">19</div>
<div class="a" style="left:0px;top:583px;width:25px;height:1px;background:#c6c6c6"></div>
<div class="a" style="left:-137px;width:300px;text-align:center;top:567.5px;font-size:12px;line-height:12px;color:#262626;font-weight:400;">20</div>
<div class="a" style="left:0px;top:603px;width:25px;height:1px;background:#c6c6c6"></div>
<div class="a" style="left:-137px;width:300px;text-align:center;top:587.5px;font-size:12px;line-height:12px;color:#262626;font-weight:400;">21</div>
<div class="a" style="left:0px;top:623px;width:25px;height:1px;background:#c6c6c6"></div>
<div class="a" style="left:-137px;width:300px;text-align:center;top:607.5px;font-size:12px;line-height:12px;color:#262626;font-weight:400;">22</div>
<div class="a" style="left:0px;top:643px;width:25px;height:1px;background:#c6c6c6"></div>
<div class="a" style="left:-137px;width:300px;text-align:center;top:627.5px;font-size:12px;line-height:12px;color:#262626;font-weight:400;">23</div>
<div class="a" style="left:25px;top:203px;width:1275px;height:1px;background:#cbcbcb"></div>
<div class="a" style="left:25px;top:223px;width:1275px;height:1px;background:#cbcbcb"></div>
<div class="a" style="left:25px;top:243px;width:1275px;height:1px;background:#cbcbcb"></div>
<div class="a" style="left:25px;top:263px;width:1275px;height:1px;background:#cbcbcb"></div>
<div class="a" style="left:25px;top:283px;width:1275px;height:1px;background:#cbcbcb"></div>
<div class="a" style="left:25px;top:303px;width:1275px;height:1px;background:#cbcbcb"></div>
<div class="a" style="left:25px;top:323px;width:1275px;height:1px;background:#cbcbcb"></div>
<div class="a" style="left:25px;top:343px;width:1275px;height:1px;background:#cbcbcb"></div>
<div class="a" style="left:25px;top:363px;width:1275px;height:1px;background:#cbcbcb"></div>
<div class="a" style="left:25px;top:383px;width:1275px;height:1px;background:#cbcbcb"></div>
<div class="a" style="left:25px;top:403px;width:1275px;height:1px;background:#cbcbcb"></div>
<div class="a" style="left:25px;top:423px;width:1275px;height:1px;background:#cbcbcb"></div>
<div class="a" style="left:25px;top:443px;width:1275px;height:1px;background:#cbcbcb"></div>
<div class="a" style="left:25px;top:463px;width:1275px;height:1px;background:#cbcbcb"></div>
<div class="a" style="left:25px;top:483px;width:1275px;height:1px;background:#cbcbcb"></div>
<div class="a" style="left:25px;top:503px;width:1275px;height:1px;background:#cbcbcb"></div>
<div class="a" style="left:25px;top:523px;width:1275px;height:1px;background:#cbcbcb"></div>
<div class="a" style="left:25px;top:543px;width:1275px;height:1px;background:#cbcbcb"></div>
<div class="a" style="left:25px;top:563px;width:1275px;height:1px;background:#cbcbcb"></div>
<div class="a" style="left:25px;top:583px;width:1275px;height:1px;background:#cbcbcb"></div>
<div class="a" style="left:25px;top:603px;width:1275px;height:1px;background:#cbcbcb"></div>
<div class="a" style="left:25px;top:623px;width:1275px;height:1px;background:#cbcbcb"></div>
<div class="a" style="left:25px;top:643px;width:1275px;height:1px;background:#cbcbcb"></div>
<div class="a" style="left:72px;top:184px;width:1px;height:460px;background:#cbcbcb"></div>
<div class="a" style="left:203px;top:184px;width:1px;height:460px;background:#cbcbcb"></div>
<div class="a" style="left:321px;top:184px;width:1px;height:460px;background:#cbcbcb"></div>
<div class="a" style="left:433px;top:184px;width:1px;height:460px;background:#cbcbcb"></div>
<div class="a" style="left:566px;top:184px;width:1px;height:460px;background:#cbcbcb"></div>
<div class="a" style="left:724px;top:184px;width:1px;height:460px;background:#cbcbcb"></div>
<div class="a" style="left:788px;top:184px;width:1px;height:460px;background:#cbcbcb"></div>
<div class="a" style="left:852px;top:184px;width:1px;height:460px;background:#cbcbcb"></div>
<div class="a" style="left:916px;top:184px;width:1px;height:460px;background:#cbcbcb"></div>
<div class="a" style="left:980px;top:184px;width:1px;height:460px;background:#cbcbcb"></div>
<div class="a" style="left:1044px;top:184px;width:1px;height:460px;background:#cbcbcb"></div>
<div class="a" style="left:1108px;top:184px;width:1px;height:460px;background:#cbcbcb"></div>
<div class="a" style="left:1172px;top:184px;width:1px;height:460px;background:#cbcbcb"></div>
<div class="a" style="left:1236px;top:184px;width:1px;height:460px;background:#cbcbcb"></div>
<div class="a" style="left:25px;top:184px;width:1px;height:460px;background:#ababab"></div>
<div class="a" style="left:24px;top:224px;width:2px;height:100px;background:#217346"></div>
<div class="a" style="left:25px;top:203px;width:699px;height:1px;background:#000"></div>
<div class="a" style="left:25px;top:223px;width:699px;height:1px;background:#000"></div>
<div class="a" style="left:25px;top:243px;width:699px;height:1px;background:#000"></div>
<div class="a" style="left:25px;top:263px;width:699px;height:1px;background:#000"></div>
<div class="a" style="left:25px;top:283px;width:699px;height:1px;background:#000"></div>
<div class="a" style="left:25px;top:303px;width:699px;height:1px;background:#000"></div>
<div class="a" style="left:25px;top:323px;width:699px;height:1px;background:#000"></div>
<div class="a" style="left:25px;top:343px;width:699px;height:1px;background:#000"></div>
<div class="a" style="left:72px;top:203px;width:1px;height:141px;background:#000"></div>
<div class="a" style="left:203px;top:203px;width:1px;height:141px;background:#000"></div>
<div class="a" style="left:321px;top:203px;width:1px;height:141px;background:#000"></div>
<div class="a" style="left:433px;top:203px;width:1px;height:141px;background:#000"></div>
<div class="a" style="left:566px;top:203px;width:1px;height:141px;background:#000"></div>
<div class="a" style="left:724px;top:203px;width:1px;height:141px;background:#000"></div>
<div class="a" style="left:24px;top:224px;width:2px;height:100px;background:#217346"></div>
<div class="a" style="left:434px;top:222px;width:132px;height:2px;background:#217346"></div>
<div class="a" style="left:-101px;width:300px;text-align:center;top:208.3px;font-size:12.3px;line-height:12.3px;color:#000;font-weight:700;">STT</div>
<div class="a" style="left:-12.5px;width:300px;text-align:center;top:208.3px;font-size:12.3px;line-height:12.3px;color:#000;font-weight:700;">Hàng hóa</div>
<div class="a" style="left:112.5px;width:300px;text-align:center;top:208.3px;font-size:12.3px;line-height:12.3px;color:#000;font-weight:700;">Tổng số lượng</div>
<div class="a" style="left:227.5px;width:300px;text-align:center;top:208.3px;font-size:12.3px;line-height:12.3px;color:#000;font-weight:700;">Số lượng đã bán</div>
<div class="a" style="left:350px;width:300px;text-align:center;top:208.3px;font-size:12.3px;line-height:12.3px;color:#000;font-weight:700;">% số hàng đã bán</div>
<div class="a" style="left:495.5px;width:300px;text-align:center;top:208.3px;font-size:12.3px;line-height:12.3px;color:#000;font-weight:700;">% số hàng còn lại</div>
<div class="a" style="right:1222px;top:227.8px;font-size:13px;line-height:13px;color:#000;font-weight:400;">1</div>
<div class="a" style="left:75.5px;top:227.6px;font-size:13.4px;line-height:13.4px;color:#000;font-weight:400;">Bút bi</div>
<div class="a" style="right:973px;top:227.8px;font-size:13px;line-height:13px;color:#000;font-weight:400;">200</div>
<div class="a" style="right:861px;top:227.8px;font-size:13px;line-height:13px;color:#000;font-weight:400;">124</div>
<div class="a" style="right:1222px;top:247.8px;font-size:13px;line-height:13px;color:#000;font-weight:400;">2</div>
<div class="a" style="left:75.5px;top:247.6px;font-size:13.4px;line-height:13.4px;color:#000;font-weight:400;">Bút đánh dấu</div>
<div class="a" style="right:973px;top:247.8px;font-size:13px;line-height:13px;color:#000;font-weight:400;">120</div>
<div class="a" style="right:861px;top:247.8px;font-size:13px;line-height:13px;color:#000;font-weight:400;">15</div>
<div class="a" style="right:1222px;top:267.8px;font-size:13px;line-height:13px;color:#000;font-weight:400;">3</div>
<div class="a" style="left:75.5px;top:267.6px;font-size:13.4px;line-height:13.4px;color:#000;font-weight:400;">Bút chì</div>
<div class="a" style="right:973px;top:267.8px;font-size:13px;line-height:13px;color:#000;font-weight:400;">460</div>
<div class="a" style="right:861px;top:267.8px;font-size:13px;line-height:13px;color:#000;font-weight:400;">248</div>
<div class="a" style="right:1222px;top:287.8px;font-size:13px;line-height:13px;color:#000;font-weight:400;">4</div>
<div class="a" style="left:75.5px;top:287.6px;font-size:13.4px;line-height:13.4px;color:#000;font-weight:400;">Tẩy</div>
<div class="a" style="right:973px;top:287.8px;font-size:13px;line-height:13px;color:#000;font-weight:400;">300</div>
<div class="a" style="right:861px;top:287.8px;font-size:13px;line-height:13px;color:#000;font-weight:400;">126</div>
<div class="a" style="right:1222px;top:307.8px;font-size:13px;line-height:13px;color:#000;font-weight:400;">5</div>
<div class="a" style="left:75.5px;top:307.6px;font-size:13.4px;line-height:13.4px;color:#000;font-weight:400;">Thước</div>
<div class="a" style="right:973px;top:307.8px;font-size:13px;line-height:13px;color:#000;font-weight:400;">260</div>
<div class="a" style="right:861px;top:307.8px;font-size:13px;line-height:13px;color:#000;font-weight:400;">148</div>
<div class="a" style="left:47px;top:379.7px;font-size:23.5px;line-height:23.5px;font-weight:700;color:#000;transform:scaleX(0.973);transform-origin:0 0"><u style='text-decoration-thickness:2px;text-underline-offset:2.6px'>Bước 4: </u>trong danh mục</div>
<div class="a" style="left:47px;top:412.8px;font-size:23.5px;line-height:23.5px;font-weight:700;color:#000;transform:scaleX(1.01);transform-origin:0 0"><i>″</i>category<i>″</i> bấm chọn</div>
<div class="a" style="left:47px;top:445.9px;font-size:23.5px;line-height:23.5px;font-weight:700;color:#000;transform:scaleX(1.021);transform-origin:0 0"><i>″</i>percentafe<i>″</i> -> chọn <i>″</i>decimal</div>
<div class="a" style="left:47px;top:479.0px;font-size:23.5px;line-height:23.5px;font-weight:700;color:#000;transform:scaleX(0.971);transform-origin:0 0">places<i>″</i> -> chọn con số muốn</div>
<div class="a" style="left:47px;top:512.1px;font-size:23.5px;line-height:23.5px;font-weight:700;color:#000;transform:scaleX(1.028);transform-origin:0 0">làm tròn -> bấm <i>″</i>ok<i>″</i></div>
<div class="a" style="left:0px;top:644px;width:1292px;height:31px;background:#e6e6e6"></div>
<div class="a" style="left:0px;top:646px;width:1292px;height:1px;background:#c6c6c6"></div>
<div class="a" style="left:100px;top:646px;width:65px;height:25px;background:#fff;border-left:1px solid #c6c6c6;border-right:1px solid #c6c6c6"></div>
<div class="a" style="left:100px;top:669px;width:65px;height:2px;background:#217346"></div>
<div class="a" style="left:-17.5px;width:300px;text-align:center;top:653.5px;font-size:12px;line-height:12px;color:#217346;font-weight:700;">Sheet1</div>
<svg class="a" style="left:25px;top:654px" width="6" height="10" viewBox="0 0 6 10"><path d="M5 0v10L0 5z" fill="#c2c2c2"/></svg>
<svg class="a" style="left:55px;top:654px" width="6" height="10" viewBox="0 0 6 10"><path d="M0 0v10l5-5z" fill="#c2c2c2"/></svg>
<svg class="a" style="left:197px;top:651px" width="18" height="18" viewBox="0 0 18 18"><circle cx="8.5" cy="8.5" r="7.5" fill="none" stroke="#6b6b6b" stroke-width="1.2"/><path d="M8.5 4.5v8M4.5 8.5h8" stroke="#6b6b6b" stroke-width="1.6"/></svg>
<div class="a" style="left:900px;top:653px;width:392px;height:1px;background:#c6c6c6"></div>
<div class="a" style="left:900px;top:654px;width:392px;height:13px;background:#fff"></div>
<div class="a" style="left:900px;top:667px;width:392px;height:1px;background:#c6c6c6"></div>
<div class="a" style="left:0px;top:674px;width:1292px;height:1px;background:#d0d0d0"></div>
<div class="a" style="left:0px;top:675px;width:1292px;height:21px;background:#f1f1f1"></div>
<div class="a" style="left:7.5px;top:679.6px;font-size:10.8px;line-height:10.8px;color:#444;font-weight:400;">Ready</div>
<div class="a" style="left:783.5px;top:679.6px;font-size:10.8px;line-height:10.8px;color:#444;font-weight:400;">Average: 0.441393534</div>
<div class="a" style="left:908.5px;top:679.6px;font-size:10.8px;line-height:10.8px;color:#444;font-weight:400;">Count: 5</div>
<div class="a" style="left:970px;top:679.6px;font-size:10.8px;line-height:10.8px;color:#444;font-weight:400;">Sum: 2.20696767</div>
<div class="a" style="left:1074px;top:675px;width:38px;height:21px;background:#d4d4d4"></div>
<svg class="a" style="left:1086px;top:678px" width="14" height="13" viewBox="0 0 14 13"><path d="M0.5 0.5h13v12h-13zM0.5 4.5h13M0.5 8.5h13M4.5 0.5v12M9.5 0.5v12" fill="none" stroke="#555" stroke-width="1"/></svg>
<svg class="a" style="left:1124px;top:678px" width="14" height="13" viewBox="0 0 14 13"><path d="M0.5 0.5h13v12h-13z M3.5 3.5h7v6h-7z M5 5.5h4M5 7.5h4" fill="none" stroke="#555" stroke-width="1"/></svg>
<svg class="a" style="left:1162px;top:678px" width="14" height="13" viewBox="0 0 14 13"><path d="M0.5 0.5h13v12h-13z M0.5 7.5h7.5v-7 M4.5 0.5v7" fill="none" stroke="#555" stroke-width="1"/></svg>
<div class="a" style="left:1193px;top:684px;width:6px;height:2px;background:#555"></div>
<div class="a" style="left:1203px;top:684px;width:89px;height:1px;background:#b0b0b0"></div>
<div class="a" style="left:1250px;top:678px;width:5px;height:13px;background:#666"></div>
<div class="a" style="left:0px;top:696px;width:1292px;height:4px;background:#1f2d38"></div>
<div class="a" style="left:48px;top:696px;width:344px;height:4px;background:#eeeeee"></div>
<div class="a" style="left:737px;top:696px;width:48px;height:4px;background:#4d5b68"></div>
<div class="a" style="left:421px;top:224px;width:531px;height:464px;background:#f0f0f0;border:1px solid #8a8a8a;box-shadow:0 2px 11px 1px rgba(0,0,0,0.28)"></div>
<div class="a" style="left:422px;top:225px;width:529px;height:29px;background:#fff"></div>
<div class="a" style="left:430.7px;top:233.2px;font-size:11.5px;line-height:11.5px;color:#1a1a1a;font-weight:400;">Format Cells</div>
<div class="a" style="left:880px;top:232.6px;font-size:12px;line-height:12px;color:#1a1a1a;font-weight:400;">?</div>
<svg class="a" style="left:922px;top:233px" width="12" height="11" viewBox="0 0 12 11"><path d="M0.5 0.5l11 10M11.5 0.5l-11 10" stroke="#1a1a1a" stroke-width="1.2"/></svg>
<div class="a" style="left:429px;top:282px;width:515px;height:366px;background:#fff;border:1px solid #d9d9d9"></div>
<div class="a" style="left:488px;top:263px;width:71px;height:20px;background:#f0f0f0;border:1px solid #d9d9d9;border-bottom:none"></div>
<div class="a" style="left:496.2px;top:268.4px;font-size:11.3px;line-height:11.3px;color:#1a1a1a;font-weight:400;">Alignment</div>
<div class="a" style="left:558px;top:263px;width:54px;height:20px;background:#f0f0f0;border:1px solid #d9d9d9;border-bottom:none"></div>
<div class="a" style="left:573px;top:268.4px;font-size:11.3px;line-height:11.3px;color:#1a1a1a;font-weight:400;">Font</div>
<div class="a" style="left:611px;top:263px;width:56px;height:20px;background:#f0f0f0;border:1px solid #d9d9d9;border-bottom:none"></div>
<div class="a" style="left:622px;top:268.4px;font-size:11.3px;line-height:11.3px;color:#1a1a1a;font-weight:400;">Border</div>
<div class="a" style="left:666px;top:263px;width:54px;height:20px;background:#f0f0f0;border:1px solid #d9d9d9;border-bottom:none"></div>
<div class="a" style="left:685.4px;top:268.4px;font-size:11.3px;line-height:11.3px;color:#1a1a1a;font-weight:400;">Fill</div>
<div class="a" style="left:719px;top:263px;width:71px;height:20px;background:#f0f0f0;border:1px solid #d9d9d9;border-bottom:none"></div>
<div class="a" style="left:728px;top:268.4px;font-size:11.3px;line-height:11.3px;color:#1a1a1a;font-weight:400;">Protection</div>
<div class="a" style="left:429px;top:262px;width:60px;height:21px;background:#fff;border:1px solid #d9d9d9;border-bottom:none"></div>
<div class="a" style="left:430px;top:282px;width:58px;height:1px;background:#fff"></div>
<div class="a" style="left:437.7px;top:267.9px;font-size:11.3px;line-height:11.3px;color:#1a1a1a;font-weight:400;">Number</div>
<div class="a" style="left:437.3px;top:294.2px;font-size:11px;line-height:11px;color:#1a1a1a;font-weight:400;"><u>C</u>ategory:</div>
<div class="a" style="left:437px;top:308px;width:122px;height:251px;background:#fff;border:1px solid #a9a9a9"></div>
<div class="a" style="left:541px;top:309px;width:17px;height:249px;background:#f0f0f0"></div>
<svg class="a" style="left:545px;top:316px" width="9" height="6" viewBox="0 0 9 6"><path d="M0.5 5L4.5 1L8.5 5" fill="none" stroke="#b4b4b4" stroke-width="1.1"/></svg>
<svg class="a" style="left:544px;top:544px" width="9" height="6" viewBox="0 0 9 6"><path d="M0.5 1L4.5 5L8.5 1" fill="none" stroke="#b4b4b4" stroke-width="1.1"/></svg>
<div class="a" style="left:439px;top:388px;width:101px;height:13px;background:#1a74c8"></div>
<div class="a" style="left:441.5px;top:310.5px;font-size:11px;line-height:13px;color:#1a1a1a;font-weight:400;">General</div>
<div class="a" style="left:441.5px;top:323.5px;font-size:11px;line-height:13px;color:#1a1a1a;font-weight:400;">Number</div>
<div class="a" style="left:441.5px;top:336.5px;font-size:11px;line-height:13px;color:#1a1a1a;font-weight:400;">Currency</div>
<div class="a" style="left:441.5px;top:349.5px;font-size:11px;line-height:13px;color:#1a1a1a;font-weight:400;">Accounting</div>
<div class="a" style="left:441.5px;top:362.5px;font-size:11px;line-height:13px;color:#1a1a1a;font-weight:400;">Date</div>
<div class="a" style="left:441.5px;top:375.5px;font-size:11px;line-height:13px;color:#1a1a1a;font-weight:400;">Time</div>
<div class="a" style="left:441.5px;top:388.5px;font-size:11px;line-height:13px;color:#fff;font-weight:400;">Percentage</div>
<div class="a" style="left:441.5px;top:401.5px;font-size:11px;line-height:13px;color:#1a1a1a;font-weight:400;">Fraction</div>
<div class="a" style="left:441.5px;top:414.5px;font-size:11px;line-height:13px;color:#1a1a1a;font-weight:400;">Scientific</div>
<div class="a" style="left:441.5px;top:427.5px;font-size:11px;line-height:13px;color:#1a1a1a;font-weight:400;">Text</div>
<div class="a" style="left:441.5px;top:440.5px;font-size:11px;line-height:13px;color:#1a1a1a;font-weight:400;">Special</div>
<div class="a" style="left:441.5px;top:453.5px;font-size:11px;line-height:13px;color:#1a1a1a;font-weight:400;">Custom</div>
<div class="a" style="left:568px;top:314px;width:368px;height:32px;border:1px solid #dcdcdc"></div>
<div class="a" style="left:572px;top:310px;width:40px;height:10px;background:#fff"></div>
<div class="a" style="left:574px;top:309.9px;font-size:11px;line-height:11px;color:#1a1a1a;font-weight:400;">Sample</div>
<div class="a" style="left:577px;top:329.6px;font-size:10.8px;line-height:10.8px;color:#1a1a1a;font-weight:400;">62.00%</div>
<div class="a" style="left:568.4px;top:356.0px;font-size:11px;line-height:11px;color:#1a1a1a;font-weight:400;"><u>D</u>ecimal places:</div>
<div class="a" style="left:655px;top:351px;width:59px;height:20px;background:#fff;border:1px solid #a0a0a0"></div>
<div class="a" style="left:659px;top:356.0px;font-size:11px;line-height:11px;color:#1a1a1a;font-weight:400;">2</div>
<div class="a" style="left:696px;top:352px;width:17px;height:18px;background:#f0f0f0;border-left:1px solid #c6c6c6"></div>
<div class="a" style="left:697px;top:360px;width:16px;height:1px;background:#c6c6c6"></div>
<svg class="a" style="left:701px;top:354px" width="7" height="4" viewBox="0 0 7 4"><path d="M0 4L3.5 0L7 4z" fill="#333"/></svg>
<svg class="a" style="left:701px;top:363px" width="7" height="4" viewBox="0 0 7 4"><path d="M0 0L3.5 4L7 0z" fill="#333"/></svg>
<div class="a" style="left:437.5px;top:576.2px;font-size:11.5px;line-height:11.5px;color:#1a1a1a;font-weight:400;">Percentage formats multiply the cell value by 100 and displays the result with a percent symbol.</div>
<div class="a" style="left:786px;top:657px;width:74px;height:22px;background:#e1e1e1;border:2px solid #1d5f8a;box-shadow:inset 0 0 0 1px #cfe6f8"></div>
<div class="a" style="left:673px;width:300px;text-align:center;top:663.2px;font-size:11.5px;line-height:11.5px;color:#1a1a1a;font-weight:400;">OK</div>
<div class="a" style="left:870px;top:657px;width:74px;height:22px;background:#e1e1e1;border:1px solid #adadad"></div>
<div class="a" style="left:757px;width:300px;text-align:center;top:663.2px;font-size:11.5px;line-height:11.5px;color:#1a1a1a;font-weight:400;">Cancel</div>
</body></html>
